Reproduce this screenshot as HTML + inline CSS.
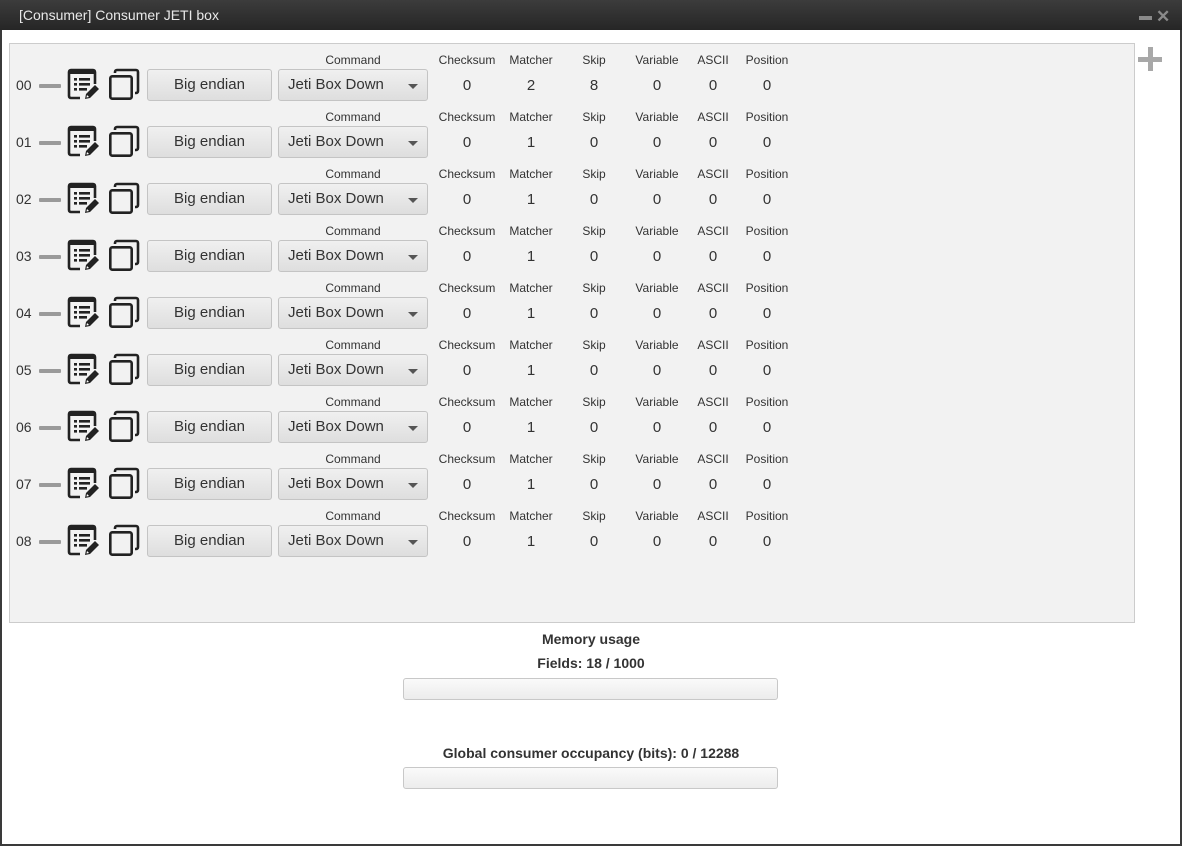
<!DOCTYPE html>
<html><head><meta charset="utf-8">
<style>
*{margin:0;padding:0;box-sizing:border-box}
body{width:1182px;height:846px;background:#fff;font-family:"Liberation Sans",sans-serif;position:relative;overflow:hidden;color:#333}
.win{position:absolute;left:0;top:0;width:1182px;height:846px;border:2px solid #3a3a3a;border-top:none}
.title{position:absolute;left:0;top:0;width:1182px;height:30px;background:linear-gradient(#3c3c3c,#262626);color:#e8e8e8;font-size:14px;line-height:30px;padding-left:19px}
.tmin{position:absolute;left:1139px;top:16px;width:13px;height:4px;background:#8a8a8a}
.tx{position:absolute;left:1156px;top:7px;color:#8a8a8a;font-size:17px;font-weight:bold;line-height:20px}
.panel{position:absolute;left:9px;top:43px;width:1126px;height:580px;background:#f2f2f2;border:1px solid #ccc}
.plus{position:absolute;left:1138px;top:57px;width:24px;height:5px;background:#a8a8a8}
.plus2{position:absolute;left:1148px;top:47px;width:5px;height:24px;background:#a8a8a8}
.a{position:absolute;white-space:nowrap}
.lbl{font-size:12px;color:#333;transform:translateX(-50%)}
.val{font-size:15px;color:#333;transform:translateX(-50%)}
.num{font-size:14px;color:#333}
.dash{position:absolute;width:22px;height:4px;background:#9a9a9a;border-radius:1px}
.btn{position:absolute;width:125px;height:32px;border:1px solid #c4c4c4;border-radius:3px;background:linear-gradient(#f0f0f0,#dedede);font-size:15px;text-align:center;line-height:30px;color:#333}
.cmb{position:absolute;width:150px;height:32px;border:1px solid #c4c4c4;border-radius:3px;background:linear-gradient(#f0f0f0,#dedede);font-size:15px;line-height:30px;color:#333;padding-left:9px}
.cmb:after{content:"";position:absolute;right:9px;top:14px;border-left:5px solid transparent;border-right:5px solid transparent;border-top:5px solid #555}
.ic{position:absolute}
.h{font-size:14px;font-weight:bold;color:#333;transform:translateX(-50%)}
.bar{position:absolute;left:403px;width:375px;height:22px;border:1px solid #c8c8c8;border-radius:3px;background:linear-gradient(#fafafa,#ececec)}
</style></head><body>
<div class="win"></div>
<div class="title">[Consumer] Consumer JETI box</div>
<div class="tmin"></div><div class="tx">✕</div>
<div class="panel"></div>
<div class="plus"></div><div class="plus2"></div>

<!-- row template: base y = 43 + 57*i -->
<div id="rows"></div>

<div class="a h" style="left:591px;top:631px">Memory usage</div>
<div class="a h" style="left:591px;top:655px">Fields: 18 / 1000</div>
<div class="bar" style="top:678px"></div>
<div class="a h" style="left:591px;top:745px">Global consumer occupancy (bits): 0 / 12288</div>
<div class="bar" style="top:767px"></div>

<!-- Rows -->
<div style="position:absolute;left:0;top:0">
<!-- ROW00 -->
<div style="position:absolute;left:0;top:0">
<div class="a num" style="left:16px;top:77px">00</div>
<div class="dash" style="left:39px;top:84px"></div>
<svg class="ic" style="left:67px;top:68px" width="34" height="34" viewBox="0 0 34 34"><path d="M13 30H4a2 2 0 0 1-2-2V4a2 2 0 0 1 2-2h22a2 2 0 0 1 2 2v12" fill="none" stroke="#222" stroke-width="2.6"/><rect x="2" y="2" width="26" height="4" fill="#222"/><g fill="#222"><rect x="7" y="10" width="3" height="2.6"/><rect x="12" y="10" width="11" height="2.6"/><rect x="7" y="15" width="3" height="2.6"/><rect x="12" y="15" width="11" height="2.6"/><rect x="7" y="20" width="3" height="2.6"/><rect x="12" y="20" width="8" height="2.6"/></g><path d="M18 31l1-5 9-9 4 4-9 9z" fill="#222"/><path d="M19.5 29.5l.5-2.5 2 2z" fill="#fff"/></svg>
<svg class="ic" style="left:107px;top:68px" width="34" height="34" viewBox="0 0 34 34"><path d="M8 5V4a2 2 0 0 1 2-2h19a2 2 0 0 1 2 2v19a2 2 0 0 1-2 2h-1" fill="none" stroke="#222" stroke-width="2.6"/><rect x="3.3" y="8.3" width="21.4" height="22.4" rx="2" fill="none" stroke="#222" stroke-width="2.6"/></svg>
<div class="btn" style="left:147px;top:69px">Big endian</div>
<div class="a lbl" style="left:353px;top:53px">Command</div>
<div class="cmb" style="left:278px;top:69px">Jeti Box Down</div>
<div class="a lbl" style="left:467px;top:53px">Checksum</div><div class="a val" style="left:467px;top:77px">0</div>
<div class="a lbl" style="left:531px;top:53px">Matcher</div><div class="a val" style="left:531px;top:77px">2</div>
<div class="a lbl" style="left:594px;top:53px">Skip</div><div class="a val" style="left:594px;top:77px">8</div>
<div class="a lbl" style="left:657px;top:53px">Variable</div><div class="a val" style="left:657px;top:77px">0</div>
<div class="a lbl" style="left:713px;top:53px">ASCII</div><div class="a val" style="left:713px;top:77px">0</div>
<div class="a lbl" style="left:767px;top:53px">Position</div><div class="a val" style="left:767px;top:77px">0</div>
</div>
<!-- ROW01 -->
<div style="position:absolute;left:0;top:57px">
<div class="a num" style="left:16px;top:77px">01</div>
<div class="dash" style="left:39px;top:84px"></div>
<svg class="ic" style="left:67px;top:68px" width="34" height="34" viewBox="0 0 34 34"><path d="M13 30H4a2 2 0 0 1-2-2V4a2 2 0 0 1 2-2h22a2 2 0 0 1 2 2v12" fill="none" stroke="#222" stroke-width="2.6"/><rect x="2" y="2" width="26" height="4" fill="#222"/><g fill="#222"><rect x="7" y="10" width="3" height="2.6"/><rect x="12" y="10" width="11" height="2.6"/><rect x="7" y="15" width="3" height="2.6"/><rect x="12" y="15" width="11" height="2.6"/><rect x="7" y="20" width="3" height="2.6"/><rect x="12" y="20" width="8" height="2.6"/></g><path d="M18 31l1-5 9-9 4 4-9 9z" fill="#222"/><path d="M19.5 29.5l.5-2.5 2 2z" fill="#fff"/></svg>
<svg class="ic" style="left:107px;top:68px" width="34" height="34" viewBox="0 0 34 34"><path d="M8 5V4a2 2 0 0 1 2-2h19a2 2 0 0 1 2 2v19a2 2 0 0 1-2 2h-1" fill="none" stroke="#222" stroke-width="2.6"/><rect x="3.3" y="8.3" width="21.4" height="22.4" rx="2" fill="none" stroke="#222" stroke-width="2.6"/></svg>
<div class="btn" style="left:147px;top:69px">Big endian</div>
<div class="a lbl" style="left:353px;top:53px">Command</div>
<div class="cmb" style="left:278px;top:69px">Jeti Box Down</div>
<div class="a lbl" style="left:467px;top:53px">Checksum</div><div class="a val" style="left:467px;top:77px">0</div>
<div class="a lbl" style="left:531px;top:53px">Matcher</div><div class="a val" style="left:531px;top:77px">1</div>
<div class="a lbl" style="left:594px;top:53px">Skip</div><div class="a val" style="left:594px;top:77px">0</div>
<div class="a lbl" style="left:657px;top:53px">Variable</div><div class="a val" style="left:657px;top:77px">0</div>
<div class="a lbl" style="left:713px;top:53px">ASCII</div><div class="a val" style="left:713px;top:77px">0</div>
<div class="a lbl" style="left:767px;top:53px">Position</div><div class="a val" style="left:767px;top:77px">0</div>
</div>
<!-- ROW02 -->
<div style="position:absolute;left:0;top:114px">
<div class="a num" style="left:16px;top:77px">02</div>
<div class="dash" style="left:39px;top:84px"></div>
<svg class="ic" style="left:67px;top:68px" width="34" height="34" viewBox="0 0 34 34"><path d="M13 30H4a2 2 0 0 1-2-2V4a2 2 0 0 1 2-2h22a2 2 0 0 1 2 2v12" fill="none" stroke="#222" stroke-width="2.6"/><rect x="2" y="2" width="26" height="4" fill="#222"/><g fill="#222"><rect x="7" y="10" width="3" height="2.6"/><rect x="12" y="10" width="11" height="2.6"/><rect x="7" y="15" width="3" height="2.6"/><rect x="12" y="15" width="11" height="2.6"/><rect x="7" y="20" width="3" height="2.6"/><rect x="12" y="20" width="8" height="2.6"/></g><path d="M18 31l1-5 9-9 4 4-9 9z" fill="#222"/><path d="M19.5 29.5l.5-2.5 2 2z" fill="#fff"/></svg>
<svg class="ic" style="left:107px;top:68px" width="34" height="34" viewBox="0 0 34 34"><path d="M8 5V4a2 2 0 0 1 2-2h19a2 2 0 0 1 2 2v19a2 2 0 0 1-2 2h-1" fill="none" stroke="#222" stroke-width="2.6"/><rect x="3.3" y="8.3" width="21.4" height="22.4" rx="2" fill="none" stroke="#222" stroke-width="2.6"/></svg>
<div class="btn" style="left:147px;top:69px">Big endian</div>
<div class="a lbl" style="left:353px;top:53px">Command</div>
<div class="cmb" style="left:278px;top:69px">Jeti Box Down</div>
<div class="a lbl" style="left:467px;top:53px">Checksum</div><div class="a val" style="left:467px;top:77px">0</div>
<div class="a lbl" style="left:531px;top:53px">Matcher</div><div class="a val" style="left:531px;top:77px">1</div>
<div class="a lbl" style="left:594px;top:53px">Skip</div><div class="a val" style="left:594px;top:77px">0</div>
<div class="a lbl" style="left:657px;top:53px">Variable</div><div class="a val" style="left:657px;top:77px">0</div>
<div class="a lbl" style="left:713px;top:53px">ASCII</div><div class="a val" style="left:713px;top:77px">0</div>
<div class="a lbl" style="left:767px;top:53px">Position</div><div class="a val" style="left:767px;top:77px">0</div>
</div>
<!-- ROW03 -->
<div style="position:absolute;left:0;top:171px">
<div class="a num" style="left:16px;top:77px">03</div>
<div class="dash" style="left:39px;top:84px"></div>
<svg class="ic" style="left:67px;top:68px" width="34" height="34" viewBox="0 0 34 34"><path d="M13 30H4a2 2 0 0 1-2-2V4a2 2 0 0 1 2-2h22a2 2 0 0 1 2 2v12" fill="none" stroke="#222" stroke-width="2.6"/><rect x="2" y="2" width="26" height="4" fill="#222"/><g fill="#222"><rect x="7" y="10" width="3" height="2.6"/><rect x="12" y="10" width="11" height="2.6"/><rect x="7" y="15" width="3" height="2.6"/><rect x="12" y="15" width="11" height="2.6"/><rect x="7" y="20" width="3" height="2.6"/><rect x="12" y="20" width="8" height="2.6"/></g><path d="M18 31l1-5 9-9 4 4-9 9z" fill="#222"/><path d="M19.5 29.5l.5-2.5 2 2z" fill="#fff"/></svg>
<svg class="ic" style="left:107px;top:68px" width="34" height="34" viewBox="0 0 34 34"><path d="M8 5V4a2 2 0 0 1 2-2h19a2 2 0 0 1 2 2v19a2 2 0 0 1-2 2h-1" fill="none" stroke="#222" stroke-width="2.6"/><rect x="3.3" y="8.3" width="21.4" height="22.4" rx="2" fill="none" stroke="#222" stroke-width="2.6"/></svg>
<div class="btn" style="left:147px;top:69px">Big endian</div>
<div class="a lbl" style="left:353px;top:53px">Command</div>
<div class="cmb" style="left:278px;top:69px">Jeti Box Down</div>
<div class="a lbl" style="left:467px;top:53px">Checksum</div><div class="a val" style="left:467px;top:77px">0</div>
<div class="a lbl" style="left:531px;top:53px">Matcher</div><div class="a val" style="left:531px;top:77px">1</div>
<div class="a lbl" style="left:594px;top:53px">Skip</div><div class="a val" style="left:594px;top:77px">0</div>
<div class="a lbl" style="left:657px;top:53px">Variable</div><div class="a val" style="left:657px;top:77px">0</div>
<div class="a lbl" style="left:713px;top:53px">ASCII</div><div class="a val" style="left:713px;top:77px">0</div>
<div class="a lbl" style="left:767px;top:53px">Position</div><div class="a val" style="left:767px;top:77px">0</div>
</div>
<!-- ROW04 -->
<div style="position:absolute;left:0;top:228px">
<div class="a num" style="left:16px;top:77px">04</div>
<div class="dash" style="left:39px;top:84px"></div>
<svg class="ic" style="left:67px;top:68px" width="34" height="34" viewBox="0 0 34 34"><path d="M13 30H4a2 2 0 0 1-2-2V4a2 2 0 0 1 2-2h22a2 2 0 0 1 2 2v12" fill="none" stroke="#222" stroke-width="2.6"/><rect x="2" y="2" width="26" height="4" fill="#222"/><g fill="#222"><rect x="7" y="10" width="3" height="2.6"/><rect x="12" y="10" width="11" height="2.6"/><rect x="7" y="15" width="3" height="2.6"/><rect x="12" y="15" width="11" height="2.6"/><rect x="7" y="20" width="3" height="2.6"/><rect x="12" y="20" width="8" height="2.6"/></g><path d="M18 31l1-5 9-9 4 4-9 9z" fill="#222"/><path d="M19.5 29.5l.5-2.5 2 2z" fill="#fff"/></svg>
<svg class="ic" style="left:107px;top:68px" width="34" height="34" viewBox="0 0 34 34"><path d="M8 5V4a2 2 0 0 1 2-2h19a2 2 0 0 1 2 2v19a2 2 0 0 1-2 2h-1" fill="none" stroke="#222" stroke-width="2.6"/><rect x="3.3" y="8.3" width="21.4" height="22.4" rx="2" fill="none" stroke="#222" stroke-width="2.6"/></svg>
<div class="btn" style="left:147px;top:69px">Big endian</div>
<div class="a lbl" style="left:353px;top:53px">Command</div>
<div class="cmb" style="left:278px;top:69px">Jeti Box Down</div>
<div class="a lbl" style="left:467px;top:53px">Checksum</div><div class="a val" style="left:467px;top:77px">0</div>
<div class="a lbl" style="left:531px;top:53px">Matcher</div><div class="a val" style="left:531px;top:77px">1</div>
<div class="a lbl" style="left:594px;top:53px">Skip</div><div class="a val" style="left:594px;top:77px">0</div>
<div class="a lbl" style="left:657px;top:53px">Variable</div><div class="a val" style="left:657px;top:77px">0</div>
<div class="a lbl" style="left:713px;top:53px">ASCII</div><div class="a val" style="left:713px;top:77px">0</div>
<div class="a lbl" style="left:767px;top:53px">Position</div><div class="a val" style="left:767px;top:77px">0</div>
</div>
<!-- ROW05 -->
<div style="position:absolute;left:0;top:285px">
<div class="a num" style="left:16px;top:77px">05</div>
<div class="dash" style="left:39px;top:84px"></div>
<svg class="ic" style="left:67px;top:68px" width="34" height="34" viewBox="0 0 34 34"><path d="M13 30H4a2 2 0 0 1-2-2V4a2 2 0 0 1 2-2h22a2 2 0 0 1 2 2v12" fill="none" stroke="#222" stroke-width="2.6"/><rect x="2" y="2" width="26" height="4" fill="#222"/><g fill="#222"><rect x="7" y="10" width="3" height="2.6"/><rect x="12" y="10" width="11" height="2.6"/><rect x="7" y="15" width="3" height="2.6"/><rect x="12" y="15" width="11" height="2.6"/><rect x="7" y="20" width="3" height="2.6"/><rect x="12" y="20" width="8" height="2.6"/></g><path d="M18 31l1-5 9-9 4 4-9 9z" fill="#222"/><path d="M19.5 29.5l.5-2.5 2 2z" fill="#fff"/></svg>
<svg class="ic" style="left:107px;top:68px" width="34" height="34" viewBox="0 0 34 34"><path d="M8 5V4a2 2 0 0 1 2-2h19a2 2 0 0 1 2 2v19a2 2 0 0 1-2 2h-1" fill="none" stroke="#222" stroke-width="2.6"/><rect x="3.3" y="8.3" width="21.4" height="22.4" rx="2" fill="none" stroke="#222" stroke-width="2.6"/></svg>
<div class="btn" style="left:147px;top:69px">Big endian</div>
<div class="a lbl" style="left:353px;top:53px">Command</div>
<div class="cmb" style="left:278px;top:69px">Jeti Box Down</div>
<div class="a lbl" style="left:467px;top:53px">Checksum</div><div class="a val" style="left:467px;top:77px">0</div>
<div class="a lbl" style="left:531px;top:53px">Matcher</div><div class="a val" style="left:531px;top:77px">1</div>
<div class="a lbl" style="left:594px;top:53px">Skip</div><div class="a val" style="left:594px;top:77px">0</div>
<div class="a lbl" style="left:657px;top:53px">Variable</div><div class="a val" style="left:657px;top:77px">0</div>
<div class="a lbl" style="left:713px;top:53px">ASCII</div><div class="a val" style="left:713px;top:77px">0</div>
<div class="a lbl" style="left:767px;top:53px">Position</div><div class="a val" style="left:767px;top:77px">0</div>
</div>
<!-- ROW06 -->
<div style="position:absolute;left:0;top:342px">
<div class="a num" style="left:16px;top:77px">06</div>
<div class="dash" style="left:39px;top:84px"></div>
<svg class="ic" style="left:67px;top:68px" width="34" height="34" viewBox="0 0 34 34"><path d="M13 30H4a2 2 0 0 1-2-2V4a2 2 0 0 1 2-2h22a2 2 0 0 1 2 2v12" fill="none" stroke="#222" stroke-width="2.6"/><rect x="2" y="2" width="26" height="4" fill="#222"/><g fill="#222"><rect x="7" y="10" width="3" height="2.6"/><rect x="12" y="10" width="11" height="2.6"/><rect x="7" y="15" width="3" height="2.6"/><rect x="12" y="15" width="11" height="2.6"/><rect x="7" y="20" width="3" height="2.6"/><rect x="12" y="20" width="8" height="2.6"/></g><path d="M18 31l1-5 9-9 4 4-9 9z" fill="#222"/><path d="M19.5 29.5l.5-2.5 2 2z" fill="#fff"/></svg>
<svg class="ic" style="left:107px;top:68px" width="34" height="34" viewBox="0 0 34 34"><path d="M8 5V4a2 2 0 0 1 2-2h19a2 2 0 0 1 2 2v19a2 2 0 0 1-2 2h-1" fill="none" stroke="#222" stroke-width="2.6"/><rect x="3.3" y="8.3" width="21.4" height="22.4" rx="2" fill="none" stroke="#222" stroke-width="2.6"/></svg>
<div class="btn" style="left:147px;top:69px">Big endian</div>
<div class="a lbl" style="left:353px;top:53px">Command</div>
<div class="cmb" style="left:278px;top:69px">Jeti Box Down</div>
<div class="a lbl" style="left:467px;top:53px">Checksum</div><div class="a val" style="left:467px;top:77px">0</div>
<div class="a lbl" style="left:531px;top:53px">Matcher</div><div class="a val" style="left:531px;top:77px">1</div>
<div class="a lbl" style="left:594px;top:53px">Skip</div><div class="a val" style="left:594px;top:77px">0</div>
<div class="a lbl" style="left:657px;top:53px">Variable</div><div class="a val" style="left:657px;top:77px">0</div>
<div class="a lbl" style="left:713px;top:53px">ASCII</div><div class="a val" style="left:713px;top:77px">0</div>
<div class="a lbl" style="left:767px;top:53px">Position</div><div class="a val" style="left:767px;top:77px">0</div>
</div>
<!-- ROW07 -->
<div style="position:absolute;left:0;top:399px">
<div class="a num" style="left:16px;top:77px">07</div>
<div class="dash" style="left:39px;top:84px"></div>
<svg class="ic" style="left:67px;top:68px" width="34" height="34" viewBox="0 0 34 34"><path d="M13 30H4a2 2 0 0 1-2-2V4a2 2 0 0 1 2-2h22a2 2 0 0 1 2 2v12" fill="none" stroke="#222" stroke-width="2.6"/><rect x="2" y="2" width="26" height="4" fill="#222"/><g fill="#222"><rect x="7" y="10" width="3" height="2.6"/><rect x="12" y="10" width="11" height="2.6"/><rect x="7" y="15" width="3" height="2.6"/><rect x="12" y="15" width="11" height="2.6"/><rect x="7" y="20" width="3" height="2.6"/><rect x="12" y="20" width="8" height="2.6"/></g><path d="M18 31l1-5 9-9 4 4-9 9z" fill="#222"/><path d="M19.5 29.5l.5-2.5 2 2z" fill="#fff"/></svg>
<svg class="ic" style="left:107px;top:68px" width="34" height="34" viewBox="0 0 34 34"><path d="M8 5V4a2 2 0 0 1 2-2h19a2 2 0 0 1 2 2v19a2 2 0 0 1-2 2h-1" fill="none" stroke="#222" stroke-width="2.6"/><rect x="3.3" y="8.3" width="21.4" height="22.4" rx="2" fill="none" stroke="#222" stroke-width="2.6"/></svg>
<div class="btn" style="left:147px;top:69px">Big endian</div>
<div class="a lbl" style="left:353px;top:53px">Command</div>
<div class="cmb" style="left:278px;top:69px">Jeti Box Down</div>
<div class="a lbl" style="left:467px;top:53px">Checksum</div><div class="a val" style="left:467px;top:77px">0</div>
<div class="a lbl" style="left:531px;top:53px">Matcher</div><div class="a val" style="left:531px;top:77px">1</div>
<div class="a lbl" style="left:594px;top:53px">Skip</div><div class="a val" style="left:594px;top:77px">0</div>
<div class="a lbl" style="left:657px;top:53px">Variable</div><div class="a val" style="left:657px;top:77px">0</div>
<div class="a lbl" style="left:713px;top:53px">ASCII</div><div class="a val" style="left:713px;top:77px">0</div>
<div class="a lbl" style="left:767px;top:53px">Position</div><div class="a val" style="left:767px;top:77px">0</div>
</div>
<!-- ROW08 -->
<div style="position:absolute;left:0;top:456px">
<div class="a num" style="left:16px;top:77px">08</div>
<div class="dash" style="left:39px;top:84px"></div>
<svg class="ic" style="left:67px;top:68px" width="34" height="34" viewBox="0 0 34 34"><path d="M13 30H4a2 2 0 0 1-2-2V4a2 2 0 0 1 2-2h22a2 2 0 0 1 2 2v12" fill="none" stroke="#222" stroke-width="2.6"/><rect x="2" y="2" width="26" height="4" fill="#222"/><g fill="#222"><rect x="7" y="10" width="3" height="2.6"/><rect x="12" y="10" width="11" height="2.6"/><rect x="7" y="15" width="3" height="2.6"/><rect x="12" y="15" width="11" height="2.6"/><rect x="7" y="20" width="3" height="2.6"/><rect x="12" y="20" width="8" height="2.6"/></g><path d="M18 31l1-5 9-9 4 4-9 9z" fill="#222"/><path d="M19.5 29.5l.5-2.5 2 2z" fill="#fff"/></svg>
<svg class="ic" style="left:107px;top:68px" width="34" height="34" viewBox="0 0 34 34"><path d="M8 5V4a2 2 0 0 1 2-2h19a2 2 0 0 1 2 2v19a2 2 0 0 1-2 2h-1" fill="none" stroke="#222" stroke-width="2.6"/><rect x="3.3" y="8.3" width="21.4" height="22.4" rx="2" fill="none" stroke="#222" stroke-width="2.6"/></svg>
<div class="btn" style="left:147px;top:69px">Big endian</div>
<div class="a lbl" style="left:353px;top:53px">Command</div>
<div class="cmb" style="left:278px;top:69px">Jeti Box Down</div>
<div class="a lbl" style="left:467px;top:53px">Checksum</div><div class="a val" style="left:467px;top:77px">0</div>
<div class="a lbl" style="left:531px;top:53px">Matcher</div><div class="a val" style="left:531px;top:77px">1</div>
<div class="a lbl" style="left:594px;top:53px">Skip</div><div class="a val" style="left:594px;top:77px">0</div>
<div class="a lbl" style="left:657px;top:53px">Variable</div><div class="a val" style="left:657px;top:77px">0</div>
<div class="a lbl" style="left:713px;top:53px">ASCII</div><div class="a val" style="left:713px;top:77px">0</div>
<div class="a lbl" style="left:767px;top:53px">Position</div><div class="a val" style="left:767px;top:77px">0</div>
</div>
</div>
</body></html>
